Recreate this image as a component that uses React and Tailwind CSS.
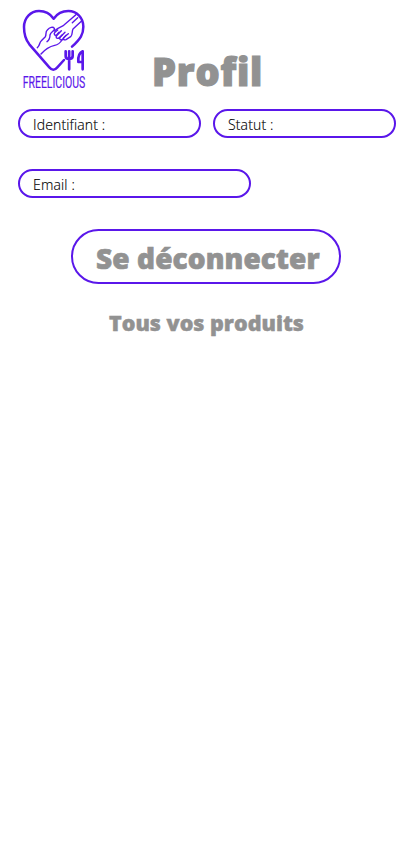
function Logo() {
  return (
    <svg className="h-[90px] w-20 shrink-0 overflow-visible" viewBox="0 0 240 270" fill="none" stroke="#5a17ea" strokeLinecap="round" strokeLinejoin="round">
      <path strokeWidth="7.500" d="M147 165 127 187Q115 201 103 187L43 118C31 103 27 87 27 66C27 39 47 18 72 18C93 18 107 28 116 41C125 28 140 18 160 18C186 18 205 39 205 65C205 88 197 101 171 125" />
      <g strokeWidth="4.200">
        <path d="M67 128C76 121 72 113 79 107L91 95C95 88 90 81 97 75C104 67 114 64 118 70C122 76 107 80 105 90C105 98 103 105 96 110" />
        <path d="M78 147C91 132 105 124 119 121C130 119 136 113 141 105" />
        <path d="M118 78C128 69 135 66 146 61L182 30M168 42 185 27" />
        <path d="M199 49 174 72C170 79 174 89 167 95L153 104C146 106 142 101 147 97L160 86" />
        <path d="M153 91 143 103C137 107 131 102 136 96L150 82" />
        <path d="M142 89 132 99C125 102 120 97 126 91L139 77" />
        <path d="M132 82 125 90C119 92 115 87 120 82L128 75" />
        <path d="M188 38 172 53" />
      </g>
      <g strokeWidth="8">
        <path d="M152 139V153Q152 162 162 162Q173 162 173 153V139M162.500 139V193" />
        <path d="M203 193V139C191 144 189 157 190 171H203" />
      </g>
      <text x="23" y="249" fill="#5a17ea" stroke="#5a17ea" strokeWidth="0.500" fontFamily="Roboto, sans-serif" fontSize="52" textLength="188" lengthAdjust="spacingAndGlyphs">FREELICIOUS</text>
    </svg>
  );
}

function Field({ label, className }) {
  return (
    <div className={`flex h-[29px] items-center rounded-full border-2 border-[#5a17ea] pl-[13px] pt-[3px] text-[14px] font-light leading-none tracking-[0.15px] text-black [-webkit-text-stroke:0.15px_black] ${className}`}>
      {label}
    </div>
  );
}

export default function App() {
  return (
    <main className="min-h-[847px] w-[412px] bg-white font-['Open_Sans','Noto_Sans',sans-serif]">
      <header className="flex h-[109px] pl-[15px] pt-[5px]">
        <Logo />
        <h1 className="ml-[57px] mt-[38px] whitespace-nowrap text-[38px] font-black leading-[56px] tracking-[0.8px] text-[#929292] [-webkit-text-stroke:1.2px_#929292]">Profil</h1>
      </header>
      <section className="flex flex-wrap gap-x-3 gap-y-[31px] pl-[18px]">
        <Field label="Identifiant :" className="w-[183px]" />
        <Field label="Statut :" className="w-[183px]" />
        <Field label="Email :" className="w-[233px]" />
      </section>
      <button className="ml-[71px] mt-[31px] flex h-[55px] w-[270px] items-center whitespace-nowrap rounded-full border-2 border-[#5a17ea] pl-[23px] pt-[3px] text-[28px] font-black tracking-[0.1px] text-[#929292] [-webkit-text-stroke:0.7px_#929292]">Se déconnecter</button>
      <h2 className="ml-[109px] mt-[23px] whitespace-nowrap text-[21.5px] font-black leading-8 text-[#929292] [-webkit-text-stroke:0.5px_#929292]">Tous vos produits</h2>
    </main>
  );
}
